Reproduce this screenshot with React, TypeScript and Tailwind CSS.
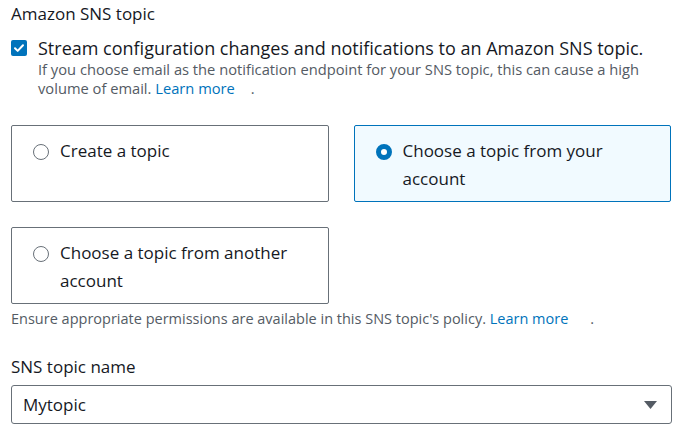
function Radio({ checked }: { checked?: boolean }) {
  return checked ? (
    <span className="mt-[1px] box-border inline-block h-[16px] w-[16px] shrink-0 rounded-full border-[5px] border-[#0073bb] bg-white" />
  ) : (
    <span className="mt-[1px] box-border inline-block h-[16px] w-[16px] shrink-0 rounded-full border-[1.5px] border-[#687078] bg-white" />
  );
}

function Tile({ label, checked }: { label: string; checked?: boolean }) {
  return (
    <div
      className={
        checked
          ? "flex h-[77px] gap-[11px] rounded-[2px] border border-[#0073bb] bg-[#f1faff] pl-[21px] pr-4 pt-[11px]"
          : "flex h-[77px] gap-[11px] rounded-[2px] border border-[#687078] bg-white pl-[21px] pr-4 pt-[11px]"
      }
    >
      <div className="flex h-[28px] items-center">
        <Radio checked={checked} />
      </div>
      <div className="text-[17px] leading-[28px] text-[#16191f]">{label}</div>
    </div>
  );
}

export default function App() {
  return (
    <div className="min-h-[437px] w-[683px] bg-white px-[11px] pt-[2px] font-['Open_Sans',sans-serif] text-[#16191f]">
      <div className="text-[17px] leading-[24px]">Amazon SNS topic</div>

      <div className="mt-[10px] flex gap-[11px]">
        <div className="flex h-[24px] items-center">
          <span className="flex h-[16px] w-[16px] items-center justify-center rounded-[2px] bg-[#0073bb]">
            <svg width="12" height="12" viewBox="0 0 12 12" fill="none">
              <path d="M2 6.2l2.7 2.7L10 3.3" stroke="white" strokeWidth="2" strokeLinecap="round" strokeLinejoin="round" />
            </svg>
          </span>
        </div>
        <div>
          <div className="text-[18px] leading-[24px]">
            Stream configuration changes and notifications to an Amazon SNS topic.
          </div>
          <div className="text-[14.7px] leading-[19px] text-[#545b64]">
            If you choose email as the notification endpoint for your SNS topic, this can cause a high volume of email.{" "}
            <span className="text-[#0073bb]">Learn more</span>
            <span className="ml-[16px]">.</span>
          </div>
        </div>
      </div>

      <div className="mt-[27px] grid grid-cols-2 gap-x-[25px] gap-y-[25px] pr-[1px]">
        <Tile label="Create a topic" />
        <Tile label="Choose a topic from your account" checked />
        <Tile label="Choose a topic from another account" />
      </div>

      <div className="mt-[5px] text-[14.5px] leading-[19px] text-[#545b64]">
        Ensure appropriate permissions are available in this SNS topic's policy.{" "}
        <span className="text-[#0073bb]">Learn more</span>
        <span className="ml-[22px]">.</span>
      </div>

      <div className="mt-[27px] text-[17px] leading-[24px]">SNS topic name</div>

      <div className="mt-[6px] flex h-[39px] items-center justify-between rounded-[3px] border border-[#687078] pl-[11px] pr-[14px]">
        <span className="text-[17px]">Mytopic</span>
        <svg width="13" height="8" viewBox="0 0 13 8">
          <path d="M0 0h13L6.5 8z" fill="#545b64" />
        </svg>
      </div>
    </div>
  );
}
